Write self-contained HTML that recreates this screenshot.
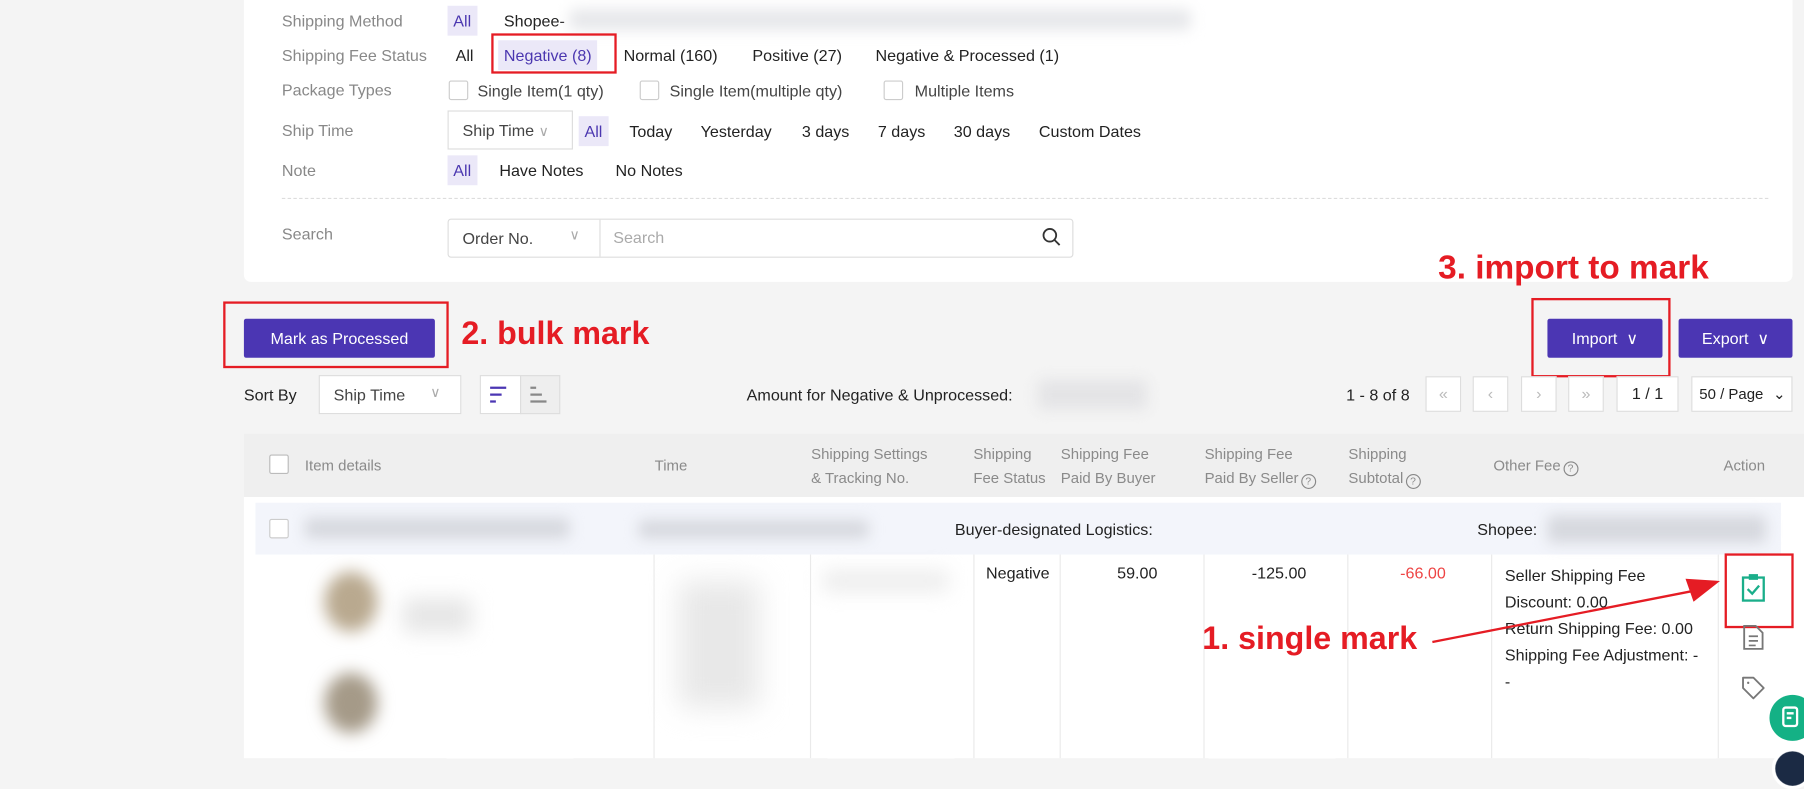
<!DOCTYPE html>
<html><head><meta charset="utf-8"><style>
html,body{margin:0;padding:0;width:1804px;height:758px;overflow:hidden;background:#f4f4f4;font-family:"Liberation Sans",sans-serif;}
#w{position:absolute;left:0;top:0;width:1568px;height:659px;transform:scale(1.15051);transform-origin:0 0;}
.a{position:absolute;white-space:nowrap;}
.t{font-size:14px;color:#222;line-height:18px;}
.l{font-size:14px;color:#888;line-height:18px;}
.pill{position:absolute;background:#ebe8f8;color:#4b37b0;font-size:14px;line-height:26px;padding:0 5px;}
.cb{position:absolute;width:15px;height:15px;border:1px solid #ccc;border-radius:2px;background:#fff;}
.box{position:absolute;border:1px solid #ddd;background:#fff;box-sizing:border-box;}
.red{position:absolute;border:2px solid #e51c24;box-sizing:border-box;}
.ann{position:absolute;color:#e51c24;font-size:28px;font-weight:bold;white-space:nowrap;line-height:30px;}
.btn{position:absolute;background:#4b36b3;color:#fff;font-size:14px;text-align:center;line-height:34px;border-radius:2px;}
.blur{position:absolute;background:#d6d8de;filter:blur(6px);border-radius:4px;}
.h{position:absolute;font-size:13px;color:#8a8a8a;line-height:21px;white-space:nowrap;}
.vl{position:absolute;width:1px;background:#eaeaea;top:482px;height:177px;}
.q{display:inline-block;width:11px;height:11px;border:1.3px solid #888;border-radius:50%;font-size:9px;line-height:11px;text-align:center;vertical-align:-1px;margin-left:2px;}
.pg{position:absolute;top:327px;height:31px;border:1px solid #ddd;background:#fff;box-sizing:border-box;color:#bbb;font-size:14px;text-align:center;line-height:29px;}
</style></head><body><div id="w">
<div style="position:absolute;left:212px;top:0;width:1346px;height:245px;background:#fff;border-radius:0 0 6px 6px;"></div>
<div class="a l" style="left:245px;top:9px">Shipping Method</div>
<div class="pill" style="left:389px;top:5px">All</div>
<div class="a t" style="left:438px;top:9px">Shopee-</div>
<div class="blur" style="left:495px;top:8px;width:540px;height:18px;background:#e6e7ea"></div>
<div class="a l" style="left:245px;top:39px">Shipping Fee Status</div>
<div class="a t" style="left:396px;top:39px">All</div>
<div class="pill" style="left:433px;top:35px">Negative (8)</div>
<div class="red" style="left:427px;top:29px;width:109px;height:35px"></div>
<div class="a t" style="left:542px;top:39px">Normal (160)</div>
<div class="a t" style="left:654px;top:39px">Positive (27)</div>
<div class="a t" style="left:761px;top:39px">Negative &amp; Processed (1)</div>
<div class="a l" style="left:245px;top:69px">Package Types</div>
<div class="cb" style="left:390px;top:70px"></div><div class="a t" style="left:415px;top:70px;color:#444">Single Item(1 qty)</div>
<div class="cb" style="left:556px;top:70px"></div><div class="a t" style="left:582px;top:70px;color:#444">Single Item(multiple qty)</div>
<div class="cb" style="left:768px;top:70px"></div><div class="a t" style="left:795px;top:70px;color:#444">Multiple Items</div>
<div class="a l" style="left:245px;top:104px">Ship Time</div>
<div class="box" style="left:389px;top:96px;width:109px;height:34px"></div>
<div class="a t" style="left:402px;top:104px;color:#444">Ship Time <span style="color:#aaa;font-size:12px">∨</span></div>
<div class="pill" style="left:503px;top:101px">All</div>
<div class="a t" style="left:547px;top:105px">Today</div>
<div class="a t" style="left:609px;top:105px">Yesterday</div>
<div class="a t" style="left:697px;top:105px">3 days</div>
<div class="a t" style="left:763px;top:105px">7 days</div>
<div class="a t" style="left:829px;top:105px">30 days</div>
<div class="a t" style="left:903px;top:105px">Custom Dates</div>
<div class="a l" style="left:245px;top:139px">Note</div>
<div class="pill" style="left:389px;top:135px">All</div>
<div class="a t" style="left:434px;top:139px">Have Notes</div>
<div class="a t" style="left:535px;top:139px">No Notes</div>
<div style="position:absolute;left:245px;top:172px;width:1292px;border-top:1px dashed #ddd"></div>
<div class="a l" style="left:245px;top:194px">Search</div>
<div class="box" style="left:389px;top:190px;width:544px;height:34px;border-radius:3px"></div>
<div style="position:absolute;left:521px;top:191px;width:1px;height:32px;background:#ddd"></div>
<div class="a t" style="left:402px;top:198px;color:#444">Order No.</div>
<div class="a" style="left:495px;top:197px;color:#aaa;font-size:12px">∨</div>
<div class="a" style="left:533px;top:198px;color:#aaa;font-size:14px">Search</div>
<svg class="a" style="left:905px;top:197px" width="18" height="18" viewBox="0 0 18 18"><circle cx="7.5" cy="7.5" r="5.5" fill="none" stroke="#333" stroke-width="1.6"/><path d="M11.5 11.5L16 16" stroke="#333" stroke-width="1.6"/></svg>
<div class="ann" style="left:1250px;top:218px;font-size:29px">3. import to mark</div>
<div class="btn" style="left:212px;top:277px;width:166px">Mark as Processed</div>
<div class="red" style="left:194px;top:262px;width:196px;height:58px"></div>
<div class="ann" style="left:401px;top:275px">2. bulk mark</div>
<div class="btn" style="left:1345px;top:277px;width:100px">Import &nbsp;∨</div>
<div class="btn" style="left:1459px;top:277px;width:99px">Export &nbsp;∨</div>
<div class="red" style="left:1331px;top:259px;width:121px;height:69px"></div>
<div class="a t" style="left:212px;top:334px">Sort By</div>
<div class="box" style="left:277px;top:326px;width:124px;height:34px"></div>
<div class="a t" style="left:290px;top:334px;color:#444">Ship Time</div>
<div class="a" style="left:374px;top:334px;color:#aaa;font-size:12px">∨</div>
<div class="box" style="left:417px;top:326px;width:36px;height:34px"></div>
<div class="box" style="left:452px;top:326px;width:35px;height:34px;background:#eee"></div>
<svg class="a" style="left:425px;top:335px" width="18" height="16"><path d="M1 2h14M1 8h10M1 14h5" stroke="#4b36b3" stroke-width="2"/></svg>
<svg class="a" style="left:460px;top:335px" width="18" height="16"><path d="M1 2h5M1 8h10M1 14h14" stroke="#888" stroke-width="2"/></svg>
<div class="a t" style="left:649px;top:334px">Amount for Negative &amp; Unprocessed:</div>
<div class="blur" style="left:902px;top:330px;width:95px;height:26px;background:#e4e4e6"></div>
<div class="a t" style="left:1170px;top:334px">1 - 8 of 8</div>
<div class="pg" style="left:1239px;width:31px">«</div>
<div class="pg" style="left:1280px;width:31px">‹</div>
<div class="pg" style="left:1322px;width:31px">›</div>
<div class="pg" style="left:1363px;width:31px">»</div>
<div class="pg" style="left:1405px;width:54px;color:#222">1 / 1</div>
<div class="pg" style="left:1470px;width:88px;color:#222;font-size:13px;text-align:left;padding-left:6px">50 / Page <span style="position:absolute;right:5px">⌄</span></div>
<div style="position:absolute;left:212px;top:377px;width:1356px;height:55px;background:#efefef"></div>
<div class="cb" style="left:234px;top:395px;border-color:#bbb"></div>
<div class="h" style="left:265px;top:394px">Item details</div>
<div class="h" style="left:569px;top:394px">Time</div>
<div class="h" style="left:705px;top:384px">Shipping Settings<br>&amp; Tracking No.</div>
<div class="h" style="left:846px;top:384px">Shipping<br>Fee Status</div>
<div class="h" style="left:922px;top:384px">Shipping Fee<br>Paid By Buyer</div>
<div class="h" style="left:1047px;top:384px">Shipping Fee<br>Paid By Seller<span class="q">?</span></div>
<div class="h" style="left:1172px;top:384px">Shipping<br>Subtotal<span class="q">?</span></div>
<div class="h" style="left:1298px;top:394px">Other Fee<span class="q">?</span></div>
<div class="h" style="left:1498px;top:394px">Action</div>
<div style="position:absolute;left:212px;top:432px;width:1356px;height:227px;background:#fff"></div>
<div style="position:absolute;left:222px;top:437px;width:1326px;height:45px;background:#f3f5fb"></div>
<div class="cb" style="left:234px;top:451px"></div>
<div class="blur" style="left:265px;top:450px;width:230px;height:18px"></div>
<div class="blur" style="left:555px;top:452px;width:200px;height:16px"></div>
<div class="a t" style="left:830px;top:451px">Buyer-designated Logistics:</div>
<div class="a t" style="left:1284px;top:451px">Shopee:</div>
<div class="blur" style="left:1345px;top:448px;width:190px;height:24px"></div>
<div class="vl" style="left:568px"></div><div class="vl" style="left:704px"></div><div class="vl" style="left:846px"></div><div class="vl" style="left:921px"></div><div class="vl" style="left:1046px"></div><div class="vl" style="left:1171px"></div><div class="vl" style="left:1296px"></div><div class="vl" style="left:1493px"></div>
<div class="blur" style="left:282px;top:497px;width:46px;height:52px;background:#b9a98f;border-radius:50%;filter:blur(7px)"></div>
<div class="blur" style="left:282px;top:585px;width:46px;height:52px;background:#a59a88;border-radius:50%;filter:blur(7px)"></div>
<div class="blur" style="left:350px;top:520px;width:60px;height:30px;background:#e6e6e6;filter:blur(9px)"></div>
<div class="blur" style="left:590px;top:505px;width:70px;height:110px;background:#e8e8e8;filter:blur(12px)"></div>
<div class="blur" style="left:715px;top:495px;width:110px;height:20px;background:#eee;filter:blur(8px)"></div>
<div class="a t" style="left:857px;top:489px">Negative</div>
<div class="a t" style="left:971px;top:489px">59.00</div>
<div class="a t" style="left:1088px;top:489px">-125.00</div>
<div class="a t" style="left:1217px;top:489px;color:#ee4444">-66.00</div>
<div class="a t" style="left:1308px;top:489px;line-height:23px">Seller Shipping Fee<br>Discount: 0.00<br>Return Shipping Fee: 0.00<br>Shipping Fee Adjustment: -<br>-</div>
<svg class="a" style="left:1512px;top:498px" width="24" height="26" viewBox="0 0 24 26"><rect x="3" y="4" width="18" height="20" fill="none" stroke="#1aae8a" stroke-width="2"/><rect x="8" y="1" width="8" height="5" fill="#1aae8a"/><path d="M7 14l4 4 6-7" fill="none" stroke="#1aae8a" stroke-width="2"/></svg>
<div class="red" style="left:1499px;top:481px;width:60px;height:65px"></div>
<svg class="a" style="left:1514px;top:543px" width="20" height="22" viewBox="0 0 20 22"><path d="M2 1h10l6 6v14H2z" fill="none" stroke="#777" stroke-width="1.6"/><path d="M6 10h8M6 14h8M6 18h6" stroke="#777" stroke-width="1.5"/></svg>
<svg class="a" style="left:1513px;top:587px" width="22" height="22" viewBox="0 0 22 22"><path d="M2 2h9l9 9-9 9-9-9z" fill="none" stroke="#777" stroke-width="1.6" stroke-linejoin="round"/><circle cx="6.5" cy="6.5" r="1" fill="#777"/></svg>
<div style="position:absolute;left:1538px;top:604px;width:40px;height:40px;border-radius:50%;background:#14b185"></div>
<svg class="a" style="left:1548px;top:613px" width="18" height="20" viewBox="0 0 18 20"><rect x="2" y="2" width="12" height="16" rx="2" fill="none" stroke="#fff" stroke-width="2"/><path d="M5 7h6M5 11h4" stroke="#fff" stroke-width="2"/></svg>
<div style="position:absolute;left:1540px;top:650px;width:30px;height:30px;border-radius:50%;background:#1b2a44;border:3px solid #fff"></div>
<div class="ann" style="left:1045px;top:540px">1. single mark</div>
<svg class="a" style="left:1240px;top:495px" width="265" height="70"><path d="M5 63L240 17" stroke="#e51c24" stroke-width="2"/><path d="M255 10L225 8 232 28z" fill="#e51c24"/></svg>
</div></body></html>
